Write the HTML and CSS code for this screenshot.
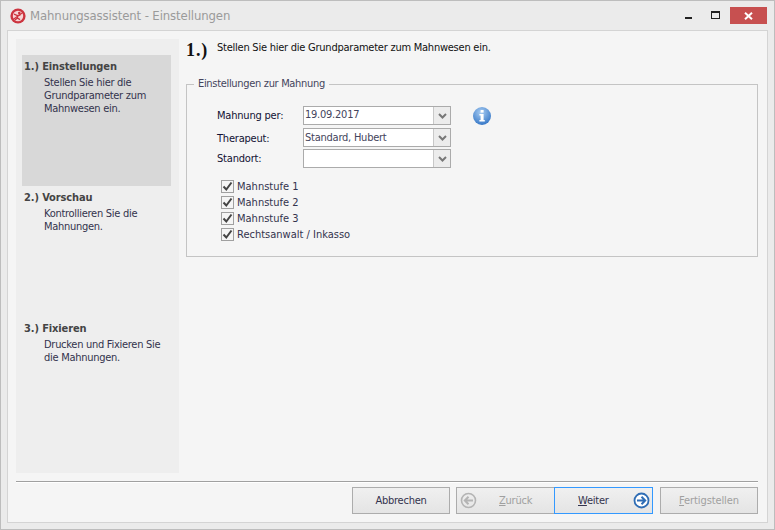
FILE: index.html
```html
<!DOCTYPE html>
<html lang="de">
<head>
<meta charset="utf-8">
<title>Mahnungsassistent - Einstellungen</title>
<link rel="stylesheet" href="styles.css">
</head>
<body>
<div class="window">
  <header class="titlebar">
    <svg class="app-icon" width="16" height="16" viewBox="0 0 16 16"><circle cx="8" cy="8" r="7.6" fill="#cc3540"/><circle cx="8" cy="8" r="5.2" fill="#f6d5d6"/><circle cx="9.3" cy="5" r="1.3" fill="#c9343c"/><path d="M4 6.2 7.4 7.6 10.4 6.8M7.8 7.4 7.4 10 10 11.6M7.4 10 5 12" fill="none" stroke="#c9343c" stroke-width="1.3"/><path d="M3.2 11.4 12.8 4.6" stroke="#cc3540" stroke-width="1.2"/></svg>
    <span class="title">Mahnungsassistent - Einstellungen</span>
    <div class="controls">
      <span class="ctl-min"></span>
      <span class="ctl-max"></span>
      <span class="ctl-close"><svg width="9" height="8" viewBox="0 0 9 8"><path d="M1 0.8 8 7.2M8 0.8 1 7.2" stroke="#fff" stroke-width="2"/></svg></span>
    </div>
  </header>
  <div class="client">
    <div class="main">
      <nav class="sidebar">
        <section class="step active">
          <h2>1.) Einstellungen</h2>
          <p>Stellen Sie hier die<br>Grundparameter zum<br>Mahnwesen ein.</p>
        </section>
        <section class="step">
          <h2>2.) Vorschau</h2>
          <p>Kontrollieren Sie die<br>Mahnungen.</p>
        </section>
        <section class="step">
          <h2>3.) Fixieren</h2>
          <p>Drucken und Fixieren Sie<br>die Mahnungen.</p>
        </section>
      </nav>
      <div class="content">
        <div class="heading">
          <span class="num">1.)</span>
          <span class="intro">Stellen Sie hier die Grundparameter zum Mahnwesen ein.</span>
        </div>
        <fieldset class="group">
          <legend>Einstellungen zur Mahnung</legend>
          <div class="form">
            <div class="row row-date">
              <label>Mahnung per:</label>
              <div class="combo"><span class="value">19.09.2017</span><span class="arrow"><svg width="9" height="6" viewBox="0 0 9 6"><path d="M1 1 4.5 4.5 8 1" fill="none" stroke="#777" stroke-width="2"/></svg></span></div>
              <svg class="info" width="20" height="20" viewBox="0 0 20 20"><defs><radialGradient id="ig" cx="45%" cy="30%" r="75%"><stop offset="0" stop-color="#a9cdf2"/><stop offset="1" stop-color="#2f72c4"/></radialGradient></defs><circle cx="10" cy="10" r="9" fill="url(#ig)"/><rect x="8.6" y="4" width="3" height="2.6" fill="#fff"/><path d="M7.4 8h4.2v6h1.2v1.6H7.4V14h1.2V9.6H7.4z" fill="#fff"/></svg>
            </div>
            <div class="row row-therapist">
              <label>Therapeut:</label>
              <div class="combo"><span class="value">Standard, Hubert</span><span class="arrow"><svg width="9" height="6" viewBox="0 0 9 6"><path d="M1 1 4.5 4.5 8 1" fill="none" stroke="#777" stroke-width="2"/></svg></span></div>
            </div>
            <div class="row">
              <label>Standort:</label>
              <div class="combo"><span class="value"></span><span class="arrow"><svg width="9" height="6" viewBox="0 0 9 6"><path d="M1 1 4.5 4.5 8 1" fill="none" stroke="#777" stroke-width="2"/></svg></span></div>
            </div>
          </div>
          <ul class="checks">
            <li><span class="box"><svg width="11" height="11" viewBox="0 0 11 11"><path d="M1.5 5.5 4.3 8.5 9.5 1.5" fill="none" stroke="#444" stroke-width="2"/></svg></span>Mahnstufe 1</li>
            <li><span class="box"><svg width="11" height="11" viewBox="0 0 11 11"><path d="M1.5 5.5 4.3 8.5 9.5 1.5" fill="none" stroke="#444" stroke-width="2"/></svg></span>Mahnstufe 2</li>
            <li><span class="box"><svg width="11" height="11" viewBox="0 0 11 11"><path d="M1.5 5.5 4.3 8.5 9.5 1.5" fill="none" stroke="#444" stroke-width="2"/></svg></span>Mahnstufe 3</li>
            <li><span class="box"><svg width="11" height="11" viewBox="0 0 11 11"><path d="M1.5 5.5 4.3 8.5 9.5 1.5" fill="none" stroke="#444" stroke-width="2"/></svg></span>Rechtsanwalt / Inkasso</li>
          </ul>
        </fieldset>
      </div>
    </div>
    <footer class="footer">
      <button class="btn cancel">Abbrechen</button>
      <div class="nav-pair">
        <button class="btn back" disabled><svg width="17" height="17" viewBox="0 0 17 17"><circle cx="8.5" cy="8.5" r="7" fill="none" stroke="#b4b4b4" stroke-width="1.6"/><path d="M13 8.5H5M8.5 4.8 4.8 8.5l3.7 3.7" fill="none" stroke="#b4b4b4" stroke-width="2"/></svg><span><u>Z</u>urück</span></button>
        <button class="btn next"><span><u>W</u>eiter</span><svg width="17" height="17" viewBox="0 0 17 17"><circle cx="8.5" cy="8.5" r="7" fill="#fff" stroke="#2f6db5" stroke-width="1.8"/><path d="M4 8.5h8M8.5 4.8l3.7 3.7-3.7 3.7" fill="none" stroke="#2f6db5" stroke-width="2"/></svg></button>
      </div>
      <button class="btn finish" disabled><span><u>F</u>ertigstellen</span></button>
    </footer>
  </div>
</div>
</body>
</html>
```
FILE: styles.css
```css
* { box-sizing: border-box; }
html, body { margin: 0; padding: 0; }
body {
  width: 775px;
  height: 530px;
  overflow: hidden;
  font-family: "DejaVu Sans Condensed", "DejaVu Sans", sans-serif;
  font-size: 11px;
  letter-spacing: -0.24px;
  color: #33334d;
}
.window {
  width: 775px;
  height: 530px;
  background: #ebebeb;
  border: 1px solid #bdbdbd;
  padding: 0 6px 6px;
  display: flex;
  flex-direction: column;
}
.titlebar {
  height: 29px;
  flex: none;
  display: flex;
  align-items: center;
  padding: 0 0 0 3px;
}
.app-icon { margin-right: 4px; }
.title {
  font-size: 13px;
  color: #9a9a9a;
  letter-spacing: -0.11px;
}
.controls {
  margin-left: auto;
  display: flex;
  align-items: center;
  align-self: flex-start;
  margin-top: 6px;
  margin-right: 1px;
}
.ctl-min {
  width: 7px;
  height: 2px;
  background: #222;
  margin-right: 19px;
  margin-top: 5px;
}
.ctl-max {
  width: 7px;
  height: 5px;
  border: 1px solid #222;
  border-top-width: 2px;
  margin-right: 10px;
  margin-top: -2px;
  box-sizing: content-box;
}
.ctl-close {
  width: 37px;
  height: 17px;
  background: #c75050;
  display: flex;
  align-items: center;
  justify-content: center;
}
.client {
  flex: 1;
  min-height: 0;
  background: #f5f5f5;
  border: 1px solid #d4d4d4;
  padding: 8px 8px 0;
  display: flex;
  flex-direction: column;
}
.main {
  height: 434px;
  flex: none;
  display: flex;
}
.sidebar {
  width: 163px;
  flex: none;
  background: #eeeeee;
  padding: 16px 8px 0 6px;
}
.step {
  height: 131px;
  padding: 5px 2px;
  color: #33334d;
}
.step.active { background: #d8d8d8; }
.step h2 {
  margin: 0 0 2px;
  font-size: 11px;
  line-height: 14px;
  font-weight: bold;
  letter-spacing: -0.12px;
  color: #444444;
}
.step p {
  margin: 0;
  padding-left: 20px;
  line-height: 13px;
  letter-spacing: -0.28px;
}
.content {
  flex: 1;
  padding-left: 7px;
  min-width: 0;
}
.heading {
  display: flex;
  align-items: flex-start;
  height: 38px;
}
.num {
  font-family: "Liberation Serif", serif;
  font-weight: bold;
  font-size: 18px;
  letter-spacing: 0.9px;
  color: #111;
  width: 31px;
  line-height: 20px;
  margin-top: 1px;
}
.intro {
  color: #111;
  line-height: 14px;
  margin-top: 2px;
}
.group {
  margin: 0;
  border: 1px solid #c4c4c4;
  padding: 0 0 0 30px;
  height: 180px;
  width: 572px;
}
.group legend {
  margin-left: -23px;
  padding: 0 4px;
  line-height: 14px;
  letter-spacing: -0.32px;
  color: #44445c;
}
.form {
  display: flex;
  flex-direction: column;
  gap: 2px;
  padding-top: 15px;
}
.row {
  display: flex;
  align-items: center;
  height: 19px;
}
.row-date { margin-bottom: 1px; }
.row label {
  width: 86px;
  letter-spacing: -0.2px;
  color: #111133;
}
.combo {
  width: 148px;
  height: 19px;
  display: flex;
  border: 1px solid #ababab;
  background: #fff;
}
.value {
  flex: 1;
  padding-left: 1px;
  line-height: 15px;
  color: #44445c;
}
.row-therapist .value { line-height: 17px; }
.row-therapist label { padding-top: 1px; }
.arrow {
  width: 17px;
  background: #ececec;
  border-left: 1px solid #c8c8c8;
  display: flex;
  align-items: center;
  justify-content: center;
}
.info { margin-left: 21px; }
.checks {
  list-style: none;
  margin: 10px 0 0 4px;
  padding: 0;
  letter-spacing: 0;
}
.checks li {
  height: 16px;
  display: flex;
  align-items: center;
  color: #33334d;
}
.box {
  width: 13px;
  height: 13px;
  border: 1px solid #a0a0a0;
  background: #f5f5f5;
  margin-right: 3px;
  display: flex;
  align-items: center;
  justify-content: center;
}
.footer {
  flex: 1;
  margin-top: 8px;
  margin-right: 1px;
  border-top: 1px solid #a0a0a0;
  box-shadow: inset 0 1px 0 #fff;
  display: flex;
  align-items: flex-start;
  padding: 5px 0 0 336px;
  width: 742px;
}
.btn {
  height: 27px;
  font-family: inherit;
  font-size: 11px;
  letter-spacing: inherit;
  color: #33334d;
  border: 1px solid #acacac;
  background: linear-gradient(#f0f0f0, #e4e4e4);
  padding: 0;
}
.cancel { width: 99px; }
.nav-pair {
  display: flex;
  margin-left: 6px;
}
.back, .next {
  display: flex;
  align-items: center;
}
.back {
  width: 98px;
  color: #a0a0a0;
  padding-left: 3px;
  border-right: none;
}
.back span { margin-left: 22px; }
.next {
  width: 99px;
  border-color: #3399ff;
  justify-content: space-between;
  padding: 0 2px 0 23px;
  color: #33334d;
}
.finish {
  width: 99px;
  margin-left: 7px;
  color: #a0a0a0;
  letter-spacing: -0.1px;
}
```
